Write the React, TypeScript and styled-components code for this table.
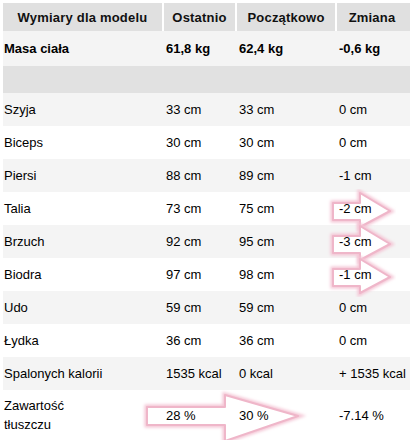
import React from 'react'
import styled, { createGlobalStyle } from 'styled-components'

const GlobalStyle = createGlobalStyle`
  html, body {
    margin: 0;
    padding: 0;
    background: #fff;
  }
  body {
    font-family: "Liberation Sans", Arial, sans-serif;
    font-size: 13px;
    color: #000;
  }
`

const Page = styled.div`
  position: relative;
  width: 410px;
  height: 440px;
  overflow: hidden;
  padding: 3px 0 0 3px;
  box-sizing: border-box;
`

const Row = styled.div<{ $bg: string; $h: number }>`
  display: grid;
  grid-template-columns: 159px 73px 100px 72px;
  height: ${p => p.$h}px;
  background: ${p => p.$bg};
  align-items: center;
`

const HeadCell = styled.div`
  height: 100%;
  display: flex;
  align-items: center;
  justify-content: center;
  font-weight: bold;
  color: #111;
  letter-spacing: 0.2px;
  & + & {
    border-left: 2px solid #fff;
  }
`

const Cell = styled.div<{ $first?: boolean; $bold?: boolean }>`
  position: relative;
  z-index: 1;
  padding-left: ${p => (p.$first ? 1 : 4)}px;
  font-weight: ${p => (p.$bold ? 'bold' : 'normal')};
  line-height: 19px;
  white-space: nowrap;
`

const Overlay = styled.svg`
  position: absolute;
  left: 0;
  top: 0;
  pointer-events: none;
`

type Line = { kind: 'bold' | 'spacer' | 'plain'; h: number; cells: string[] }

const rows: Line[] = [
  { kind: 'bold', h: 35, cells: ['Masa ciała', '61,8 kg', '62,4 kg', '-0,6 kg'] },
  { kind: 'spacer', h: 27, cells: ['', '', '', ''] },
  { kind: 'plain', h: 33, cells: ['Szyja', '33 cm', '33 cm', '0 cm'] },
  { kind: 'plain', h: 33, cells: ['Biceps', '30 cm', '30 cm', '0 cm'] },
  { kind: 'plain', h: 33, cells: ['Piersi', '88 cm', '89 cm', '-1 cm'] },
  { kind: 'plain', h: 33, cells: ['Talia', '73 cm', '75 cm', '-2 cm'] },
  { kind: 'plain', h: 33, cells: ['Brzuch', '92 cm', '95 cm', '-3 cm'] },
  { kind: 'plain', h: 33, cells: ['Biodra', '97 cm', '98 cm', '-1 cm'] },
  { kind: 'plain', h: 33, cells: ['Udo', '59 cm', '59 cm', '0 cm'] },
  { kind: 'plain', h: 33, cells: ['Łydka', '36 cm', '36 cm', '0 cm'] },
  { kind: 'plain', h: 33, cells: ['Spalonych kalorii', '1535 kcal', '0 kcal', '+ 1535 kcal'] },
  { kind: 'plain', h: 50, cells: ['Zawartość\ntłuszczu', '28 %', '30 %', '-7.14 %'] },
]

const small = (y: number) =>
  `M333 ${y - 8} H360 V${y - 18} L390 ${y} L360 ${y + 16} V${y + 9} H333 Z`

const arrows = [
  small(211),
  small(244),
  small(277),
  'M147 407 H225 V395 L298 416 L225 441 V425 H147 Z',
]

const App = () => {
  let light = true
  return (
    <Page>
      <GlobalStyle />
      <Row $bg="#e0e0e0" $h={28}>
        <HeadCell>Wymiary dla modelu</HeadCell>
        <HeadCell>Ostatnio</HeadCell>
        <HeadCell>Początkowo</HeadCell>
        <HeadCell>Zmiana</HeadCell>
      </Row>
      {rows.map((r, i) => {
        let bg = '#f4f4f4'
        if (r.kind === 'spacer') bg = '#e1e1e1'
        else if (r.kind === 'plain') {
          bg = light ? '#f4f4f4' : '#ffffff'
          light = !light
        }
        return (
          <Row key={i} $bg={bg} $h={r.h}>
            {r.cells.map((c, j) => (
              <Cell key={j} $first={j === 0} $bold={r.kind === 'bold'}>
                {c.split('\n').map((t, k) => (
                  <div key={k}>{t}</div>
                ))}
              </Cell>
            ))}
          </Row>
        )
      })}
      <Overlay width={410} height={440} viewBox="0 0 410 440">
        <defs>
          <filter id="soft" x="-10%" y="-10%" width="120%" height="120%">
            <feGaussianBlur stdDeviation="1.4" />
          </filter>
        </defs>
        {arrows.map((d, i) => (
          <g key={i}>
            <path d={d} fill="none" stroke="#f4c4d4" strokeWidth={5} filter="url(#soft)" />
            <path d={d} fill="#ffffff" stroke="#efb6c9" strokeWidth={2} strokeLinejoin="round" />
          </g>
        ))}
      </Overlay>
    </Page>
  )
}

export default App
